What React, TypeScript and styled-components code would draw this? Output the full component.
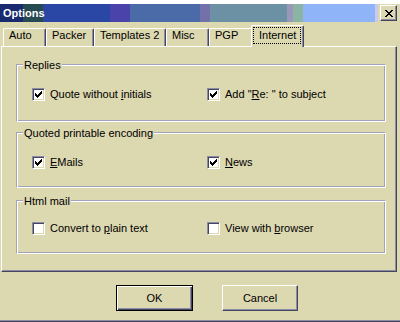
import React from "react";
import styled, { createGlobalStyle } from "styled-components";

const KHAKI = "#dcd8b0";
const DARK = "#45455e";
const MID = "#8c8ca6";
const ETCH = "#a2a2b8";

const Global = createGlobalStyle`
  html, body { margin: 0; padding: 0; background: #fff; }
  body { font-family: "Liberation Sans", Arial, sans-serif; font-size: 11px; color: #000; }
`;

const Window = styled.div`
  width: 400px;
  height: 322px;
  display: flex;
  flex-direction: column;
  background: #fff;
`;

const TopStrip = styled.div`
  height: 4px;
  flex: none;
  background: #fff;
`;

const Frame = styled.div`
  flex: 1;
  display: flex;
  flex-direction: column;
  background: ${KHAKI};
  border-bottom: 1px solid ${DARK};
  box-shadow: inset 0 -1px 0 ${MID};
`;

const TitleBar = styled.div`
  height: 18px;
  display: flex;
  align-items: center;
  flex: none;
`;

const Caption = styled.div`
  width: 378px;
  height: 18px;
  box-sizing: border-box;
  padding-left: 3px;
  line-height: 18px;
  color: #fff;
  font-weight: bold;
  font-size: 11px;
  background: linear-gradient(
    to right,
    #192a6e 0px, #192a6e 23px,
    #264a52 23px, #264a52 43px,
    #2a47a6 43px, #2a47a6 110px,
    #4a44aa 110px, #4a44aa 130px,
    #4a6aa8 130px, #4a6aa8 200px,
    #7470aa 200px, #7470aa 210px,
    #6c90a4 210px, #6c90a4 287px,
    #9a98b8 287px, #9a98b8 293px,
    #8cb4a4 293px, #8cb4a4 303px,
    #90b4f8 303px, #90b4f8 375px,
    #c8c8f0 375px, #c8c8f0 378px
  );
`;

const CloseButton = styled.div`
  width: 17px;
  height: 16px;
  margin-left: 2px;
  box-sizing: border-box;
  background: ${KHAKI};
  border-top: 1px solid #fff;
  border-left: 1px solid #fff;
  border-right: 1px solid ${DARK};
  border-bottom: 1px solid ${DARK};
  box-shadow: inset -1px -1px 0 ${MID};
  display: flex;
  align-items: center;
  justify-content: center;
`;

const TabRow = styled.div`
  height: 24px;
  flex: none;
  display: flex;
  align-items: flex-end;
  padding-left: 3px;
  position: relative;
  z-index: 1;
`;

const Tab = styled.div<{ $w: number; $active?: boolean }>`
  width: ${(p) => p.$w}px;
  height: ${(p) => (p.$active ? 22 : 18)}px;
  margin-left: ${(p) => (p.$active ? -2 : 0)}px;
  margin-bottom: ${(p) => (p.$active ? -1 : 0)}px;
  box-sizing: border-box;
  background: ${KHAKI};
  border-top: 1px solid #fff;
  border-left: 1px solid #fff;
  border-right: 1px solid ${DARK};
  box-shadow: inset -1px 0 0 ${MID};
  border-radius: 2px 2px 0 0;
  padding: ${(p) => (p.$active ? "1px 2px 0 1px" : "0 0 0 5px")};
  line-height: 13px;
  font-size: 11px;
  display: flex;
  align-items: flex-start;
`;

const Focus = styled.span`
  flex: 1;
  height: 17px;
  box-sizing: border-box;
  border: 1px dotted #000;
  padding-left: 5px;
  padding-top: 1px;
  line-height: 13px;
`;

const Panel = styled.div`
  margin-left: 1px;
  width: 396px;
  height: 226px;
  box-sizing: border-box;
  flex: none;
  border-top: 1px solid #fff;
  border-left: 1px solid #fff;
  border-right: 1px solid ${DARK};
  border-bottom: 1px solid ${DARK};
  box-shadow: inset -1px -1px 0 ${MID};
  padding: 17px 0 0 14px;
  display: flex;
  flex-direction: column;
`;

const Group = styled.div<{ $h: number; $pt: number; $mt: number }>`
  position: relative;
  width: 370px;
  height: ${(p) => p.$h}px;
  margin-top: ${(p) => p.$mt}px;
  box-sizing: border-box;
  border-top: 1px solid ${ETCH};
  border-left: 1px solid ${ETCH};
  border-right: 1px solid #fff;
  border-bottom: 1px solid #fff;
  box-shadow: inset 1px 1px 0 #fff, inset -1px -1px 0 ${ETCH};
  padding: ${(p) => p.$pt}px 0 0 15px;
  display: grid;
  grid-template-columns: 175px auto;
  align-content: start;
`;

const Legend = styled.span`
  position: absolute;
  top: -6px;
  left: 6px;
  padding: 0 1px;
  background: ${KHAKI};
  line-height: 13px;
  white-space: nowrap;
`;

const CheckRow = styled.label`
  display: flex;
  align-items: center;
  height: 13px;
  gap: 5px;
  white-space: nowrap;
  line-height: 13px;
`;

const Box = styled.span`
  width: 13px;
  height: 13px;
  box-sizing: border-box;
  flex: none;
  background: #fff;
  border-top: 1px solid ${MID};
  border-left: 1px solid ${MID};
  border-right: 1px solid #fff;
  border-bottom: 1px solid #fff;
  box-shadow: inset 1px 1px 0 ${DARK}, inset -1px -1px 0 ${KHAKI};
  display: flex;
  align-items: center;
  justify-content: center;
`;

const ButtonRow = styled.div`
  margin-top: 13px;
  display: flex;
  justify-content: center;
  gap: 29px;
  padding-left: 14px;
`;

const Button = styled.div<{ $default?: boolean; $w: number }>`
  width: ${(p) => p.$w}px;
  height: 26px;
  box-sizing: border-box;
  display: flex;
  align-items: center;
  justify-content: center;
  font-size: 11px;
  background: ${KHAKI};
  ${(p) =>
    p.$default
      ? `border: 1px solid #000;
         box-shadow: inset 1px 1px 0 #fff, inset -1px -1px 0 ${DARK}, inset -2px -2px 0 ${MID};`
      : `border-top: 1px solid #fff; border-left: 1px solid #fff;
         border-right: 1px solid ${DARK}; border-bottom: 1px solid ${DARK};
         box-shadow: inset -1px -1px 0 ${MID};`}
`;

const CheckMark = () => (
  <svg width="7" height="7" viewBox="0 0 7 7" shapeRendering="crispEdges">
    <rect x="6" y="0" width="1" height="1" fill="#000" />
    <rect x="5" y="1" width="2" height="1" fill="#000" />
    <rect x="0" y="2" width="1" height="1" fill="#000" />
    <rect x="4" y="2" width="3" height="1" fill="#000" />
    <rect x="0" y="3" width="2" height="1" fill="#000" />
    <rect x="3" y="3" width="3" height="1" fill="#000" />
    <rect x="0" y="4" width="5" height="1" fill="#000" />
    <rect x="1" y="5" width="3" height="1" fill="#000" />
    <rect x="2" y="6" width="1" height="1" fill="#000" />
  </svg>
);

const CloseX = () => (
  <svg width="8" height="7" viewBox="0 0 8 7" shapeRendering="crispEdges">
    <rect x="0" y="0" width="2" height="1" fill="#000" />
    <rect x="6" y="0" width="2" height="1" fill="#000" />
    <rect x="1" y="1" width="2" height="1" fill="#000" />
    <rect x="5" y="1" width="2" height="1" fill="#000" />
    <rect x="2" y="2" width="4" height="1" fill="#000" />
    <rect x="3" y="3" width="2" height="1" fill="#000" />
    <rect x="2" y="4" width="4" height="1" fill="#000" />
    <rect x="1" y="5" width="2" height="1" fill="#000" />
    <rect x="5" y="5" width="2" height="1" fill="#000" />
    <rect x="0" y="6" width="2" height="1" fill="#000" />
    <rect x="6" y="6" width="2" height="1" fill="#000" />
  </svg>
);

const Check: React.FC<{ checked?: boolean; children: React.ReactNode }> = ({ checked, children }) => (
  <CheckRow>
    <Box>{checked && <CheckMark />}</Box>
    <span>{children}</span>
  </CheckRow>
);

const tabs = [
  { label: "Auto", w: 43 },
  { label: "Packer", w: 48 },
  { label: "Templates 2", w: 72 },
  { label: "Misc", w: 43 },
  { label: "PGP", w: 44 },
];

export default function App() {
  return (
    <Window>
      <Global />
      <TopStrip />
      <Frame>
        <TitleBar>
          <Caption>Options</Caption>
          <CloseButton>
            <CloseX />
          </CloseButton>
        </TitleBar>
        <TabRow>
          {tabs.map((t) => (
            <Tab key={t.label} $w={t.w}>
              <span>{t.label}</span>
            </Tab>
          ))}
          <Tab $w={53} $active>
            <Focus>Internet</Focus>
          </Tab>
        </TabRow>
        <Panel>
          <Group $h={58} $pt={23} $mt={0}>
            <Legend>Replies</Legend>
            <Check checked>
              Quote without <u>i</u>nitials
            </Check>
            <Check checked>
              Add "<u>R</u>e: " to subject
            </Check>
          </Group>
          <Group $h={56} $pt={23} $mt={10}>
            <Legend>Quoted printable encoding</Legend>
            <Check checked>
              <u>E</u>Mails
            </Check>
            <Check checked>
              <u>N</u>ews
            </Check>
          </Group>
          <Group $h={54} $pt={21} $mt={12}>
            <Legend>Html mail</Legend>
            <Check>
              Convert to <u>p</u>lain text
            </Check>
            <Check>
              View with <u>b</u>rowser
            </Check>
          </Group>
        </Panel>
        <ButtonRow>
          <Button $default $w={77}>OK</Button>
          <Button $w={76}>Cancel</Button>
        </ButtonRow>
      </Frame>
    </Window>
  );
}
